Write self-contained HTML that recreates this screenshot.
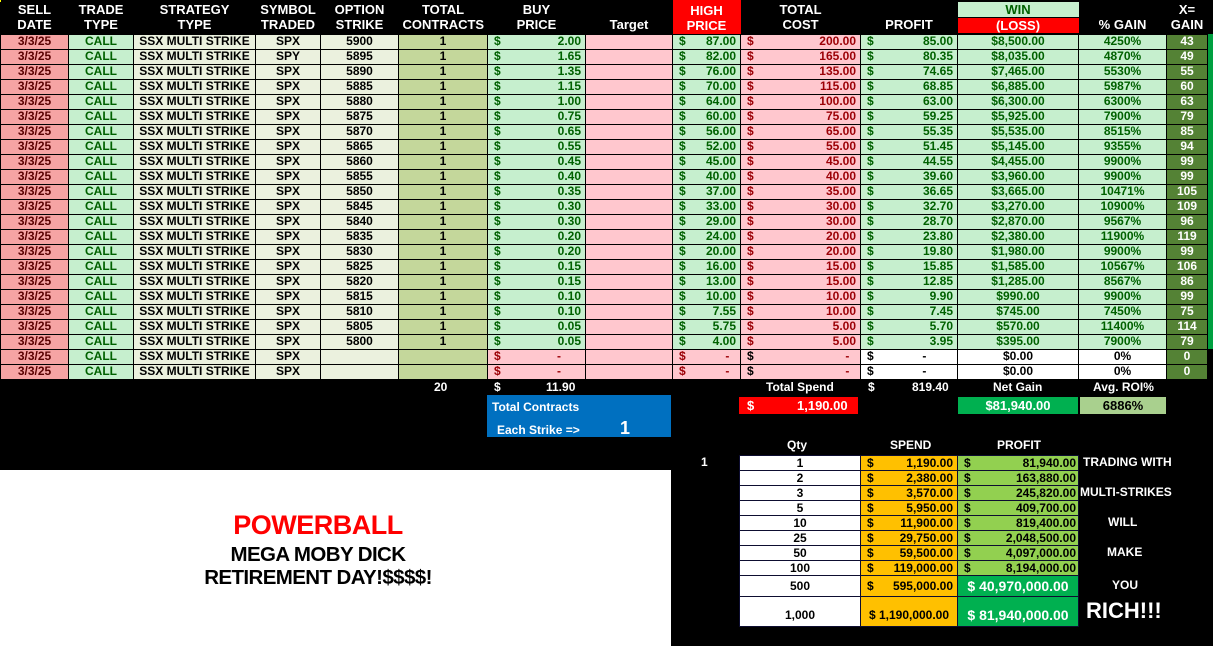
<!DOCTYPE html>
<html><head><meta charset="utf-8"><style>
*{margin:0;padding:0;box-sizing:border-box}
body{width:1213px;height:646px;background:#000;position:relative;overflow:hidden;font-family:"Liberation Sans Narrow","Liberation Sans",Arial,sans-serif;font-weight:bold;font-size:12px}
table{position:absolute;left:0;top:0;border-collapse:collapse;table-layout:fixed;width:1207px}
td{height:15px;line-height:13px;border:1px solid #000;text-align:center;white-space:nowrap;overflow:hidden;padding:0 4px}
tr.h td{height:34px;line-height:15px;color:#fff;background:#000;font-size:13px;border:none;vertical-align:bottom;padding-bottom:2px}
tr.r td:nth-child(1){background:#f6a4a4;color:#5a0000}
tr.r td:nth-child(2){background:#c6efce;color:#006100}
tr.r td:nth-child(3),tr.r td:nth-child(4),tr.r td:nth-child(5){background:#ebf1de;color:#000}
tr.r td:nth-child(6){background:#c4d79b;color:#000}
tr.r td:nth-child(7){background:#c6efce;color:#006100;text-align:right}
tr.r td:nth-child(8){background:#ffc7ce}
tr.r td:nth-child(9){background:#c6efce;color:#006100;text-align:right}
tr.r td:nth-child(10){background:#ffc7ce;color:#9c0006;text-align:right}
tr.r td:nth-child(11){background:#c6efce;color:#006100;text-align:right}
tr.r td:nth-child(12),tr.r td:nth-child(13){background:#c6efce;color:#006100}
tr.r td:nth-child(14){background:#548235;color:#fff}
tr.b td:nth-child(7){background:#ffc7ce;color:#9c0006}
tr.b td:nth-child(9){background:#ffc7ce;color:#9c0006}
tr.b td:nth-child(11),tr.b td:nth-child(12),tr.b td:nth-child(13){background:#fff;color:#000}
.d{float:left;padding-left:2px}
.ab{position:absolute;color:#fff;white-space:nowrap}
.bt div{position:absolute;border:1px solid #0d0d30;text-align:center;line-height:14px;font-size:12px}
</style></head><body>
<div style="position:absolute;left:0;top:0;width:58px;height:2px;background:#ff0"></div>
<div style="position:absolute;left:68px;top:0;width:60px;height:2px;background:#70ad47"></div>
<div style="position:absolute;left:134px;top:0;width:118px;height:2px;background:#ff9999"></div>
<div style="position:absolute;left:256px;top:0;width:62px;height:2px;background:#ffa500"></div>
<div style="position:absolute;left:321px;top:0;width:75px;height:2px;background:#00b050"></div>
<div style="position:absolute;left:399px;top:0;width:86px;height:2px;background:#0070c0"></div>
<div style="position:absolute;left:1207px;top:34px;width:6px;height:315px;background:#00a040"></div>
<table>
<colgroup><col style="width:68px"><col style="width:65px"><col style="width:122px"><col style="width:65px"><col style="width:78px"><col style="width:89px"><col style="width:98px"><col style="width:87px"><col style="width:68px"><col style="width:120px"><col style="width:97px"><col style="width:121px"><col style="width:88px"><col style="width:41px"></colgroup>
<tr class="h"><td>SELL<br>DATE</td><td>TRADE<br>TYPE</td><td>STRATEGY<br>TYPE</td><td>SYMBOL<br>TRADED</td><td>OPTION<br>STRIKE</td><td>TOTAL<br>CONTRACTS</td><td>BUY<br>PRICE</td><td>Target</td><td style="background:#f00;padding:0;vertical-align:top;padding-top:3px">HIGH<br>PRICE</td><td>TOTAL<br>COST</td><td>PROFIT</td><td style="padding:0;vertical-align:top;padding-top:2px"><div style="background:#c6efce;color:#006100;height:15px;margin-bottom:1px">WIN</div><div style="background:#f00;height:15px">(LOSS)</div></td><td>% GAIN</td><td>X=<br>GAIN</td></tr>
<tr class="r"><td>3/3/25</td><td>CALL</td><td>SSX MULTI STRIKE</td><td>SPX</td><td>5900</td><td>1</td><td><span class="d">$</span>2.00</td><td></td><td><span class="d">$</span>87.00</td><td><span class="d">$</span>200.00</td><td><span class="d">$</span>85.00</td><td>$8,500.00</td><td>4250%</td><td>43</td></tr>
<tr class="r"><td>3/3/25</td><td>CALL</td><td>SSX MULTI STRIKE</td><td>SPY</td><td>5895</td><td>1</td><td><span class="d">$</span>1.65</td><td></td><td><span class="d">$</span>82.00</td><td><span class="d">$</span>165.00</td><td><span class="d">$</span>80.35</td><td>$8,035.00</td><td>4870%</td><td>49</td></tr>
<tr class="r"><td>3/3/25</td><td>CALL</td><td>SSX MULTI STRIKE</td><td>SPX</td><td>5890</td><td>1</td><td><span class="d">$</span>1.35</td><td></td><td><span class="d">$</span>76.00</td><td><span class="d">$</span>135.00</td><td><span class="d">$</span>74.65</td><td>$7,465.00</td><td>5530%</td><td>55</td></tr>
<tr class="r"><td>3/3/25</td><td>CALL</td><td>SSX MULTI STRIKE</td><td>SPX</td><td>5885</td><td>1</td><td><span class="d">$</span>1.15</td><td></td><td><span class="d">$</span>70.00</td><td><span class="d">$</span>115.00</td><td><span class="d">$</span>68.85</td><td>$6,885.00</td><td>5987%</td><td>60</td></tr>
<tr class="r"><td>3/3/25</td><td>CALL</td><td>SSX MULTI STRIKE</td><td>SPX</td><td>5880</td><td>1</td><td><span class="d">$</span>1.00</td><td></td><td><span class="d">$</span>64.00</td><td><span class="d">$</span>100.00</td><td><span class="d">$</span>63.00</td><td>$6,300.00</td><td>6300%</td><td>63</td></tr>
<tr class="r"><td>3/3/25</td><td>CALL</td><td>SSX MULTI STRIKE</td><td>SPX</td><td>5875</td><td>1</td><td><span class="d">$</span>0.75</td><td></td><td><span class="d">$</span>60.00</td><td><span class="d">$</span>75.00</td><td><span class="d">$</span>59.25</td><td>$5,925.00</td><td>7900%</td><td>79</td></tr>
<tr class="r"><td>3/3/25</td><td>CALL</td><td>SSX MULTI STRIKE</td><td>SPX</td><td>5870</td><td>1</td><td><span class="d">$</span>0.65</td><td></td><td><span class="d">$</span>56.00</td><td><span class="d">$</span>65.00</td><td><span class="d">$</span>55.35</td><td>$5,535.00</td><td>8515%</td><td>85</td></tr>
<tr class="r"><td>3/3/25</td><td>CALL</td><td>SSX MULTI STRIKE</td><td>SPX</td><td>5865</td><td>1</td><td><span class="d">$</span>0.55</td><td></td><td><span class="d">$</span>52.00</td><td><span class="d">$</span>55.00</td><td><span class="d">$</span>51.45</td><td>$5,145.00</td><td>9355%</td><td>94</td></tr>
<tr class="r"><td>3/3/25</td><td>CALL</td><td>SSX MULTI STRIKE</td><td>SPX</td><td>5860</td><td>1</td><td><span class="d">$</span>0.45</td><td></td><td><span class="d">$</span>45.00</td><td><span class="d">$</span>45.00</td><td><span class="d">$</span>44.55</td><td>$4,455.00</td><td>9900%</td><td>99</td></tr>
<tr class="r"><td>3/3/25</td><td>CALL</td><td>SSX MULTI STRIKE</td><td>SPX</td><td>5855</td><td>1</td><td><span class="d">$</span>0.40</td><td></td><td><span class="d">$</span>40.00</td><td><span class="d">$</span>40.00</td><td><span class="d">$</span>39.60</td><td>$3,960.00</td><td>9900%</td><td>99</td></tr>
<tr class="r"><td>3/3/25</td><td>CALL</td><td>SSX MULTI STRIKE</td><td>SPX</td><td>5850</td><td>1</td><td><span class="d">$</span>0.35</td><td></td><td><span class="d">$</span>37.00</td><td><span class="d">$</span>35.00</td><td><span class="d">$</span>36.65</td><td>$3,665.00</td><td>10471%</td><td>105</td></tr>
<tr class="r"><td>3/3/25</td><td>CALL</td><td>SSX MULTI STRIKE</td><td>SPX</td><td>5845</td><td>1</td><td><span class="d">$</span>0.30</td><td></td><td><span class="d">$</span>33.00</td><td><span class="d">$</span>30.00</td><td><span class="d">$</span>32.70</td><td>$3,270.00</td><td>10900%</td><td>109</td></tr>
<tr class="r"><td>3/3/25</td><td>CALL</td><td>SSX MULTI STRIKE</td><td>SPX</td><td>5840</td><td>1</td><td><span class="d">$</span>0.30</td><td></td><td><span class="d">$</span>29.00</td><td><span class="d">$</span>30.00</td><td><span class="d">$</span>28.70</td><td>$2,870.00</td><td>9567%</td><td>96</td></tr>
<tr class="r"><td>3/3/25</td><td>CALL</td><td>SSX MULTI STRIKE</td><td>SPX</td><td>5835</td><td>1</td><td><span class="d">$</span>0.20</td><td></td><td><span class="d">$</span>24.00</td><td><span class="d">$</span>20.00</td><td><span class="d">$</span>23.80</td><td>$2,380.00</td><td>11900%</td><td>119</td></tr>
<tr class="r"><td>3/3/25</td><td>CALL</td><td>SSX MULTI STRIKE</td><td>SPX</td><td>5830</td><td>1</td><td><span class="d">$</span>0.20</td><td></td><td><span class="d">$</span>20.00</td><td><span class="d">$</span>20.00</td><td><span class="d">$</span>19.80</td><td>$1,980.00</td><td>9900%</td><td>99</td></tr>
<tr class="r"><td>3/3/25</td><td>CALL</td><td>SSX MULTI STRIKE</td><td>SPX</td><td>5825</td><td>1</td><td><span class="d">$</span>0.15</td><td></td><td><span class="d">$</span>16.00</td><td><span class="d">$</span>15.00</td><td><span class="d">$</span>15.85</td><td>$1,585.00</td><td>10567%</td><td>106</td></tr>
<tr class="r"><td>3/3/25</td><td>CALL</td><td>SSX MULTI STRIKE</td><td>SPX</td><td>5820</td><td>1</td><td><span class="d">$</span>0.15</td><td></td><td><span class="d">$</span>13.00</td><td><span class="d">$</span>15.00</td><td><span class="d">$</span>12.85</td><td>$1,285.00</td><td>8567%</td><td>86</td></tr>
<tr class="r"><td>3/3/25</td><td>CALL</td><td>SSX MULTI STRIKE</td><td>SPX</td><td>5815</td><td>1</td><td><span class="d">$</span>0.10</td><td></td><td><span class="d">$</span>10.00</td><td><span class="d">$</span>10.00</td><td><span class="d">$</span>9.90</td><td>$990.00</td><td>9900%</td><td>99</td></tr>
<tr class="r"><td>3/3/25</td><td>CALL</td><td>SSX MULTI STRIKE</td><td>SPX</td><td>5810</td><td>1</td><td><span class="d">$</span>0.10</td><td></td><td><span class="d">$</span>7.55</td><td><span class="d">$</span>10.00</td><td><span class="d">$</span>7.45</td><td>$745.00</td><td>7450%</td><td>75</td></tr>
<tr class="r"><td>3/3/25</td><td>CALL</td><td>SSX MULTI STRIKE</td><td>SPX</td><td>5805</td><td>1</td><td><span class="d">$</span>0.05</td><td></td><td><span class="d">$</span>5.75</td><td><span class="d">$</span>5.00</td><td><span class="d">$</span>5.70</td><td>$570.00</td><td>11400%</td><td>114</td></tr>
<tr class="r"><td>3/3/25</td><td>CALL</td><td>SSX MULTI STRIKE</td><td>SPX</td><td>5800</td><td>1</td><td><span class="d">$</span>0.05</td><td></td><td><span class="d">$</span>4.00</td><td><span class="d">$</span>5.00</td><td><span class="d">$</span>3.95</td><td>$395.00</td><td>7900%</td><td>79</td></tr>
<tr class="r b"><td>3/3/25</td><td>CALL</td><td>SSX MULTI STRIKE</td><td>SPX</td><td></td><td></td><td><span class="d">$</span>-&nbsp;&nbsp;&nbsp;&nbsp;&nbsp;&nbsp;</td><td></td><td><span class="d">$</span>-&nbsp;&nbsp;</td><td><span class="d" style="color:#000">$</span>-&nbsp;&nbsp;</td><td><span class="d">$</span>-&nbsp;&nbsp;&nbsp;&nbsp;&nbsp;&nbsp;&nbsp;&nbsp;</td><td>$0.00</td><td>0%</td><td>0</td></tr>
<tr class="r b"><td>3/3/25</td><td>CALL</td><td>SSX MULTI STRIKE</td><td>SPX</td><td></td><td></td><td><span class="d">$</span>-&nbsp;&nbsp;&nbsp;&nbsp;&nbsp;&nbsp;</td><td></td><td><span class="d">$</span>-&nbsp;&nbsp;</td><td><span class="d" style="color:#000">$</span>-&nbsp;&nbsp;</td><td><span class="d">$</span>-&nbsp;&nbsp;&nbsp;&nbsp;&nbsp;&nbsp;&nbsp;&nbsp;</td><td>$0.00</td><td>0%</td><td>0</td></tr>
</table>

<div class="ab" style="left:434px;top:380px">20</div>
<div class="ab" style="left:494px;top:380px">$</div>
<div class="ab" style="left:546px;top:380px">11.90</div>
<div class="ab" style="left:766px;top:380px">Total Spend</div>
<div class="ab" style="left:868px;top:380px">$</div>
<div class="ab" style="left:912px;top:380px">819.40</div>
<div class="ab" style="left:993px;top:380px">Net Gain</div>
<div class="ab" style="left:1093px;top:380px">Avg. ROI%</div>

<div style="position:absolute;left:487px;top:395px;width:184px;height:42px;background:#0070c0"></div>
<div class="ab" style="left:492px;top:400px">Total Contracts</div>
<div class="ab" style="left:497px;top:423px">Each Strike =&gt;</div>
<div class="ab" style="left:620px;top:418px;font-size:18px">1</div>

<div style="position:absolute;left:739px;top:397px;width:119px;height:17px;background:#f00"></div>
<div class="ab" style="left:747px;top:398px;font-size:13px">$</div>
<div class="ab" style="left:797px;top:398px;font-size:13px">1,190.00</div>
<div style="position:absolute;left:958px;top:397px;width:120px;height:17px;background:#00b050;color:#fff;text-align:center;line-height:17px;font-size:13px">$81,940.00</div>
<div style="position:absolute;left:1080px;top:397px;width:86px;height:17px;background:#a9d08e;color:#000;text-align:center;line-height:17px;font-size:13px">6886%</div>

<div style="position:absolute;left:0;top:470px;width:671px;height:176px;background:#fff;font-family:'Liberation Sans',Arial,sans-serif">
<div style="position:absolute;left:0;width:636px;text-align:center;top:40px;color:#f00;font-size:27px;letter-spacing:-0.5px">POWERBALL</div>
<div style="position:absolute;left:0;width:636px;text-align:center;top:73px;color:#000;font-size:20.5px;letter-spacing:-0.6px">MEGA MOBY DICK</div>
<div style="position:absolute;left:0;width:636px;text-align:center;top:96px;color:#000;font-size:20.5px;letter-spacing:-0.6px">RETIREMENT DAY!$$$$!</div>
</div>

<div class="ab" style="left:787px;top:438px">Qty</div>
<div class="ab" style="left:890px;top:438px">SPEND</div>
<div class="ab" style="left:997px;top:438px">PROFIT</div>
<div class="ab" style="left:701px;top:455px">1</div>

<div class="bt">
<div style="left:739px;top:455px;width:122px;height:16px;background:#fff">1</div>
<div style="left:860px;top:455px;width:98px;height:16px;background:#ffc000;text-align:right;padding-right:4px"><span class="d" style="padding-left:6px">$</span>1,190.00</div>
<div style="left:957px;top:455px;width:122px;height:16px;background:#92d050;text-align:right;padding-right:2px"><span class="d" style="padding-left:6px">$</span>81,940.00</div>
<div style="left:739px;top:470px;width:122px;height:16px;background:#fff">2</div>
<div style="left:860px;top:470px;width:98px;height:16px;background:#ffc000;text-align:right;padding-right:4px"><span class="d" style="padding-left:6px">$</span>2,380.00</div>
<div style="left:957px;top:470px;width:122px;height:16px;background:#92d050;text-align:right;padding-right:2px"><span class="d" style="padding-left:6px">$</span>163,880.00</div>
<div style="left:739px;top:485px;width:122px;height:16px;background:#fff">3</div>
<div style="left:860px;top:485px;width:98px;height:16px;background:#ffc000;text-align:right;padding-right:4px"><span class="d" style="padding-left:6px">$</span>3,570.00</div>
<div style="left:957px;top:485px;width:122px;height:16px;background:#92d050;text-align:right;padding-right:2px"><span class="d" style="padding-left:6px">$</span>245,820.00</div>
<div style="left:739px;top:500px;width:122px;height:16px;background:#fff">5</div>
<div style="left:860px;top:500px;width:98px;height:16px;background:#ffc000;text-align:right;padding-right:4px"><span class="d" style="padding-left:6px">$</span>5,950.00</div>
<div style="left:957px;top:500px;width:122px;height:16px;background:#92d050;text-align:right;padding-right:2px"><span class="d" style="padding-left:6px">$</span>409,700.00</div>
<div style="left:739px;top:515px;width:122px;height:16px;background:#fff">10</div>
<div style="left:860px;top:515px;width:98px;height:16px;background:#ffc000;text-align:right;padding-right:4px"><span class="d" style="padding-left:6px">$</span>11,900.00</div>
<div style="left:957px;top:515px;width:122px;height:16px;background:#92d050;text-align:right;padding-right:2px"><span class="d" style="padding-left:6px">$</span>819,400.00</div>
<div style="left:739px;top:530px;width:122px;height:16px;background:#fff">25</div>
<div style="left:860px;top:530px;width:98px;height:16px;background:#ffc000;text-align:right;padding-right:4px"><span class="d" style="padding-left:6px">$</span>29,750.00</div>
<div style="left:957px;top:530px;width:122px;height:16px;background:#92d050;text-align:right;padding-right:2px"><span class="d" style="padding-left:6px">$</span>2,048,500.00</div>
<div style="left:739px;top:545px;width:122px;height:16px;background:#fff">50</div>
<div style="left:860px;top:545px;width:98px;height:16px;background:#ffc000;text-align:right;padding-right:4px"><span class="d" style="padding-left:6px">$</span>59,500.00</div>
<div style="left:957px;top:545px;width:122px;height:16px;background:#92d050;text-align:right;padding-right:2px"><span class="d" style="padding-left:6px">$</span>4,097,000.00</div>
<div style="left:739px;top:560px;width:122px;height:16px;background:#fff">100</div>
<div style="left:860px;top:560px;width:98px;height:16px;background:#ffc000;text-align:right;padding-right:4px"><span class="d" style="padding-left:6px">$</span>119,000.00</div>
<div style="left:957px;top:560px;width:122px;height:16px;background:#92d050;text-align:right;padding-right:2px"><span class="d" style="padding-left:6px">$</span>8,194,000.00</div>
<div style="left:739px;top:575px;width:122px;height:22px;background:#fff;line-height:20px">500</div>
<div style="left:860px;top:575px;width:98px;height:22px;background:#ffc000;text-align:right;padding-right:4px;line-height:20px"><span class="d" style="padding-left:6px">$</span>595,000.00</div>
<div style="left:957px;top:575px;width:122px;height:22px;background:#00b050;color:#fff;line-height:20px;font-size:14px">$ 40,970,000.00</div>
<div style="left:739px;top:596px;width:122px;height:31px;background:#fff;line-height:36px">1,000</div>
<div style="left:860px;top:596px;width:98px;height:31px;background:#ffc000;line-height:36px">$ 1,190,000.00</div>
<div style="left:957px;top:596px;width:122px;height:31px;background:#00b050;color:#fff;line-height:36px;font-size:14px">$ 81,940,000.00</div>
</div>

<div class="ab" style="left:1083px;top:455px">TRADING WITH</div>
<div class="ab" style="left:1080px;top:485px">MULTI-STRIKES</div>
<div class="ab" style="left:1108px;top:515px">WILL</div>
<div class="ab" style="left:1107px;top:545px">MAKE</div>
<div class="ab" style="left:1112px;top:578px">YOU</div>
<div class="ab" style="left:1086px;top:598px;font-size:22px">RICH!!!</div>
</body></html>
